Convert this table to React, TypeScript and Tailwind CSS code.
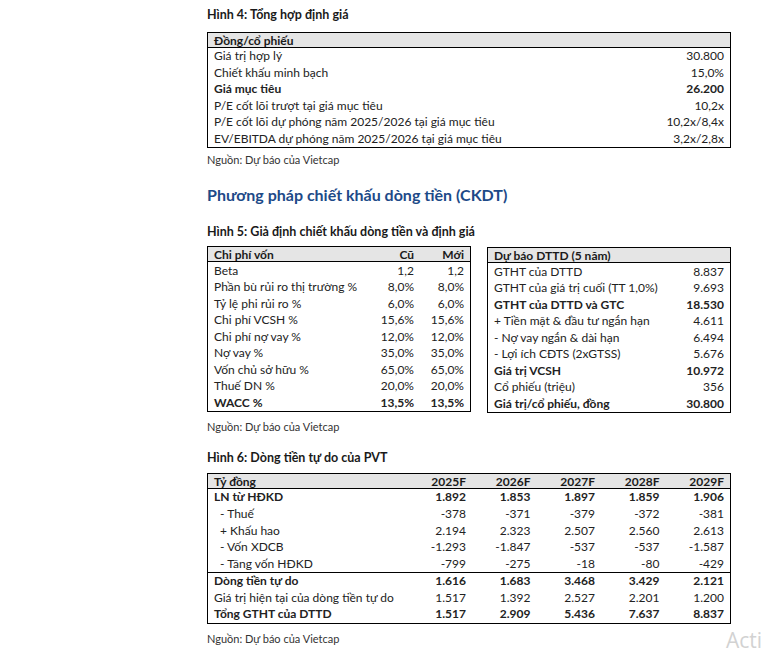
import React from 'react';

const font = { fontFamily: 'Lato, "Noto Sans", sans-serif' };

type Row = { label: string; values: string[]; bold?: boolean; indent?: boolean };

function Caption({ children }: { children: React.ReactNode }) {
  return <div className="text-[12.5px] font-bold leading-[16px] text-[#1a1a1a]">{children}</div>;
}

function Source() {
  return <div className="text-[11px] leading-[16px] text-[#333]">Nguồn: Dự báo của Vietcap</div>;
}

function Line({ row, cols }: { row: Row; cols: string }) {
  return (
    <div className={`grid ${cols} h-[16.55px] items-center px-[6px] leading-[16px] text-[12px] text-[#222] ${row.bold ? 'font-bold' : ''}`}>
      <span className={`whitespace-nowrap ${row.indent ? 'pl-[6px]' : ''}`}>{row.label}</span>
      {row.values.map((v, i) => (
        <span key={i} className="text-right whitespace-nowrap">{v}</span>
      ))}
    </div>
  );
}

function Header({ cells, cols }: { cells: string[]; cols: string }) {
  return (
    <div className={`grid ${cols} h-[15px] items-center px-[6px] bg-[#e5e5e5] border-b border-black text-[12px] font-bold leading-[15px] text-[#1a1a1a]`}>
      {cells.map((c, i) => (
        <span key={i} className={i === 0 ? 'whitespace-nowrap' : 'text-right'}>{c}</span>
      ))}
    </div>
  );
}

const summary: Row[] = [
  { label: 'Giá trị hợp lý', values: ['30.800'] },
  { label: 'Chiết khấu minh bạch', values: ['15,0%'] },
  { label: 'Giá mục tiêu', values: ['26.200'], bold: true },
  { label: 'P/E cốt lõi trượt tại giá mục tiêu', values: ['10,2x'] },
  { label: 'P/E cốt lõi dự phóng năm 2025/2026 tại giá mục tiêu', values: ['10,2x/8,4x'] },
  { label: 'EV/EBITDA dự phóng năm 2025/2026 tại giá mục tiêu', values: ['3,2x/2,8x'] },
];

const capital: Row[] = [
  { label: 'Beta', values: ['1,2', '1,2'] },
  { label: 'Phần bù rủi ro thị trường %', values: ['8,0%', '8,0%'] },
  { label: 'Tỷ lệ phi rủi ro %', values: ['6,0%', '6,0%'] },
  { label: 'Chi phí VCSH %', values: ['15,6%', '15,6%'] },
  { label: 'Chi phí nợ vay %', values: ['12,0%', '12,0%'] },
  { label: 'Nợ vay %', values: ['35,0%', '35,0%'] },
  { label: 'Vốn chủ sở hữu %', values: ['65,0%', '65,0%'] },
  { label: 'Thuế DN %', values: ['20,0%', '20,0%'] },
  { label: 'WACC %', values: ['13,5%', '13,5%'], bold: true },
];

const forecast: Row[] = [
  { label: 'GTHT của DTTD', values: ['8.837'] },
  { label: 'GTHT của giá trị cuối (TT 1,0%)', values: ['9.693'] },
  { label: 'GTHT của DTTD và GTC', values: ['18.530'], bold: true },
  { label: '+ Tiền mặt & đầu tư ngắn hạn', values: ['4.611'] },
  { label: '- Nợ vay ngắn & dài hạn', values: ['6.494'] },
  { label: '- Lợi ích CĐTS (2xGTSS)', values: ['5.676'] },
  { label: 'Giá trị VCSH', values: ['10.972'], bold: true },
  { label: 'Cổ phiếu (triệu)', values: ['356'] },
  { label: 'Giá trị/cổ phiếu, đồng', values: ['30.800'], bold: true },
];

const flowTop: Row[] = [
  { label: 'LN từ HĐKD', values: ['1.892', '1.853', '1.897', '1.859', '1.906'], bold: true },
  { label: '- Thuế', values: ['-378', '-371', '-379', '-372', '-381'], indent: true },
  { label: '+ Khấu hao', values: ['2.194', '2.323', '2.507', '2.560', '2.613'], indent: true },
  { label: '- Vốn XDCB', values: ['-1.293', '-1.847', '-537', '-537', '-1.587'], indent: true },
  { label: '- Tăng vốn HĐKD', values: ['-799', '-275', '-18', '-80', '-429'], indent: true },
];

const flowBottom: Row[] = [
  { label: 'Dòng tiền tự do', values: ['1.616', '1.683', '3.468', '3.429', '2.121'], bold: true },
  { label: 'Giá trị hiện tại của dòng tiền tự do', values: ['1.517', '1.392', '2.527', '2.201', '1.200'] },
  { label: 'Tổng GTHT của DTTD', values: ['1.517', '2.909', '5.436', '7.637', '8.837'], bold: true },
];

export default function App() {
  const c1 = 'grid-cols-[1fr_auto]';
  const c2 = 'grid-cols-[1fr_50px_50px]';
  const c3 = 'grid-cols-[1fr_64.5px_64.5px_64.5px_64.5px_64.5px]';
  return (
    <div className="relative w-[761px] h-[653px] overflow-hidden bg-white" style={font}>
      <div className="flex flex-col w-[524px] ml-[207px] pt-[7px]">
        <Caption>Hình 4: Tổng hợp định giá</Caption>
        <div className="mt-[9px] border border-black">
          <Header cells={['Đồng/cổ phiếu']} cols="grid-cols-1" />
          {summary.map((r) => (
            <Line key={r.label} row={r} cols={c1} />
          ))}
        </div>
        <div className="mt-[4px]">
          <Source />
        </div>

        <h2 className="mt-[16px] text-[16px] font-bold leading-[22px] text-[#1d4a88]">
          Phương pháp chiết khấu dòng tiền (CKDT)
        </h2>

        <div className="mt-[18px]">
          <Caption>Hình 5: Giả định chiết khấu dòng tiền và định giá</Caption>
        </div>
        <div className="mt-[6px] flex gap-[16px] items-start">
          <div className="w-[264px] border border-black">
            <Header cells={['Chi phí vốn', 'Cũ', 'Mới']} cols={c2} />
            {capital.map((r) => (
              <Line key={r.label} row={r} cols={c2} />
            ))}
          </div>
          <div className="flex-1 border border-black mt-[1px]">
            <Header cells={['Dự báo DTTD (5 năm)']} cols="grid-cols-1" />
            {forecast.map((r) => (
              <Line key={r.label} row={r} cols={c1} />
            ))}
          </div>
        </div>
        <div className="mt-[6px]">
          <Source />
        </div>

        <div className="mt-[15px]">
          <Caption>Hình 6: Dòng tiền tự do của PVT</Caption>
        </div>
        <div className="mt-[7px] border border-black">
          <Header cells={['Tỷ đồng', '2025F', '2026F', '2027F', '2028F', '2029F']} cols={c3} />
          {flowTop.map((r) => (
            <Line key={r.label} row={r} cols={c3} />
          ))}
          <div className="border-t border-black" />
          {flowBottom.map((r) => (
            <Line key={r.label} row={r} cols={c3} />
          ))}
        </div>
        <div className="mt-[7px]">
          <Source />
        </div>
      </div>

      <div
        className="absolute left-[726px] top-[626px] whitespace-nowrap text-[21px] leading-[28px] text-[#d2d2d2]"
        style={{ fontFamily: '"Open Sans", sans-serif' }}
      >
        Activate Windows
      </div>
    </div>
  );
}
